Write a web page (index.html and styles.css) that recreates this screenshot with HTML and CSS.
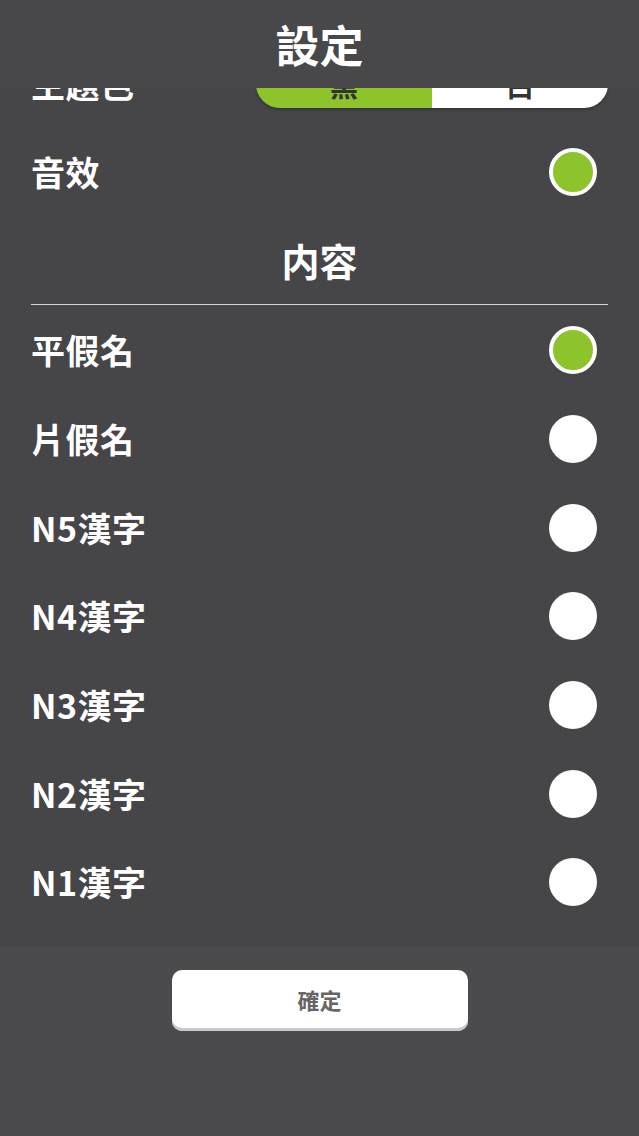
FILE: index.html
```html
<!DOCTYPE html>
<html lang="zh-Hant">
<head>
<meta charset="utf-8">
<title>設定</title>
<link rel="stylesheet" href="styles.css">
</head>
<body>
<div class="app">
  <header class="topbar"><h1 class="title">設定</h1></header>
  <main class="scroller">
    <div class="list">
      <div class="row row-top">
        <span class="label">主題色</span>
        <div class="segmented">
          <span class="seg seg-on">黑</span>
          <span class="seg seg-off">白</span>
        </div>
      </div>
      <div class="row row-top">
        <span class="label">音效</span>
        <span class="radio checked"></span>
      </div>
      <div class="section">内容</div>
      <div class="row"><span class="label">平假名</span><span class="radio checked"></span></div>
      <div class="row"><span class="label">片假名</span><span class="radio"></span></div>
      <div class="row"><span class="label">N5漢字</span><span class="radio"></span></div>
      <div class="row"><span class="label">N4漢字</span><span class="radio"></span></div>
      <div class="row"><span class="label">N3漢字</span><span class="radio"></span></div>
      <div class="row"><span class="label">N2漢字</span><span class="radio"></span></div>
      <div class="row"><span class="label">N1漢字</span><span class="radio"></span></div>
    </div>
  </main>
  <footer class="actions">
    <button class="confirm">確定</button>
  </footer>
</div>
</body>
</html>
```
FILE: styles.css
```css
html, body {
  margin: 0;
  padding: 0;
  background: #474649;
}
.app {
  width: 639px;
  height: 1136px;
  display: flex;
  flex-direction: column;
  font-family: "Noto Sans CJK TC", "Noto Sans CJK JP", "Noto Sans", sans-serif;
  color: #ffffff;
}
.topbar {
  height: 88px;
  flex: none;
  background: #48474a;
  display: flex;
  align-items: center;
  justify-content: center;
  position: relative;
  z-index: 2;
}
.title {
  margin: 0;
  font-size: 44px;
  font-weight: 700;
  line-height: 1;
}
.scroller {
  height: 859px;
  flex: none;
  overflow: hidden;
  background: #464548;
}
.list {
  margin-top: -48px;
  padding: 0 31px;
}
.row {
  height: 88.67px;
  display: flex;
  align-items: center;
  justify-content: space-between;
}
.row-top {
  height: 88px;
}
.label {
  font-size: 34px;
  font-weight: 700;
  line-height: 1;
  letter-spacing: 0.5px;
}
.segmented {
  width: 352px;
  height: 48px;
  border-radius: 24px;
  overflow: hidden;
  display: flex;
  box-shadow: 0 2px 3px rgba(0,0,0,0.25);
}
.seg {
  flex: 1;
  display: flex;
  align-items: center;
  justify-content: center;
  font-size: 28px;
  font-weight: 700;
  color: #333333;
  padding-top: 2px;
}
.seg-on { background: #8dc42b; }
.seg-off { background: #ffffff; }
.radio {
  width: 48px;
  height: 48px;
  border-radius: 50%;
  background: #ffffff;
  margin-right: 11px;
  box-sizing: border-box;
}
.radio.checked {
  background: #8dc42b;
  border: 4px solid #ffffff;
}
.section {
  height: 89px;
  margin-bottom: 1px;
  box-sizing: border-box;
  border-bottom: 1px solid #d6d6d6;
  display: flex;
  align-items: center;
  justify-content: center;
  font-size: 38px;
  font-weight: 700;
  padding-bottom: 2px;
}
.actions {
  flex: 1;
  background: #4b4a4d;
  display: flex;
  justify-content: center;
  align-items: flex-start;
  padding-top: 23px;
}
.confirm {
  width: 296px;
  height: 61px;
  border: none;
  border-radius: 10px;
  background: #ffffff;
  box-shadow: inset 0 -3px 0 #c9c9cb;
  font-family: inherit;
  font-size: 22px;
  font-weight: 700;
  color: #666666;
  padding: 0 0 3px 0;
}
```
